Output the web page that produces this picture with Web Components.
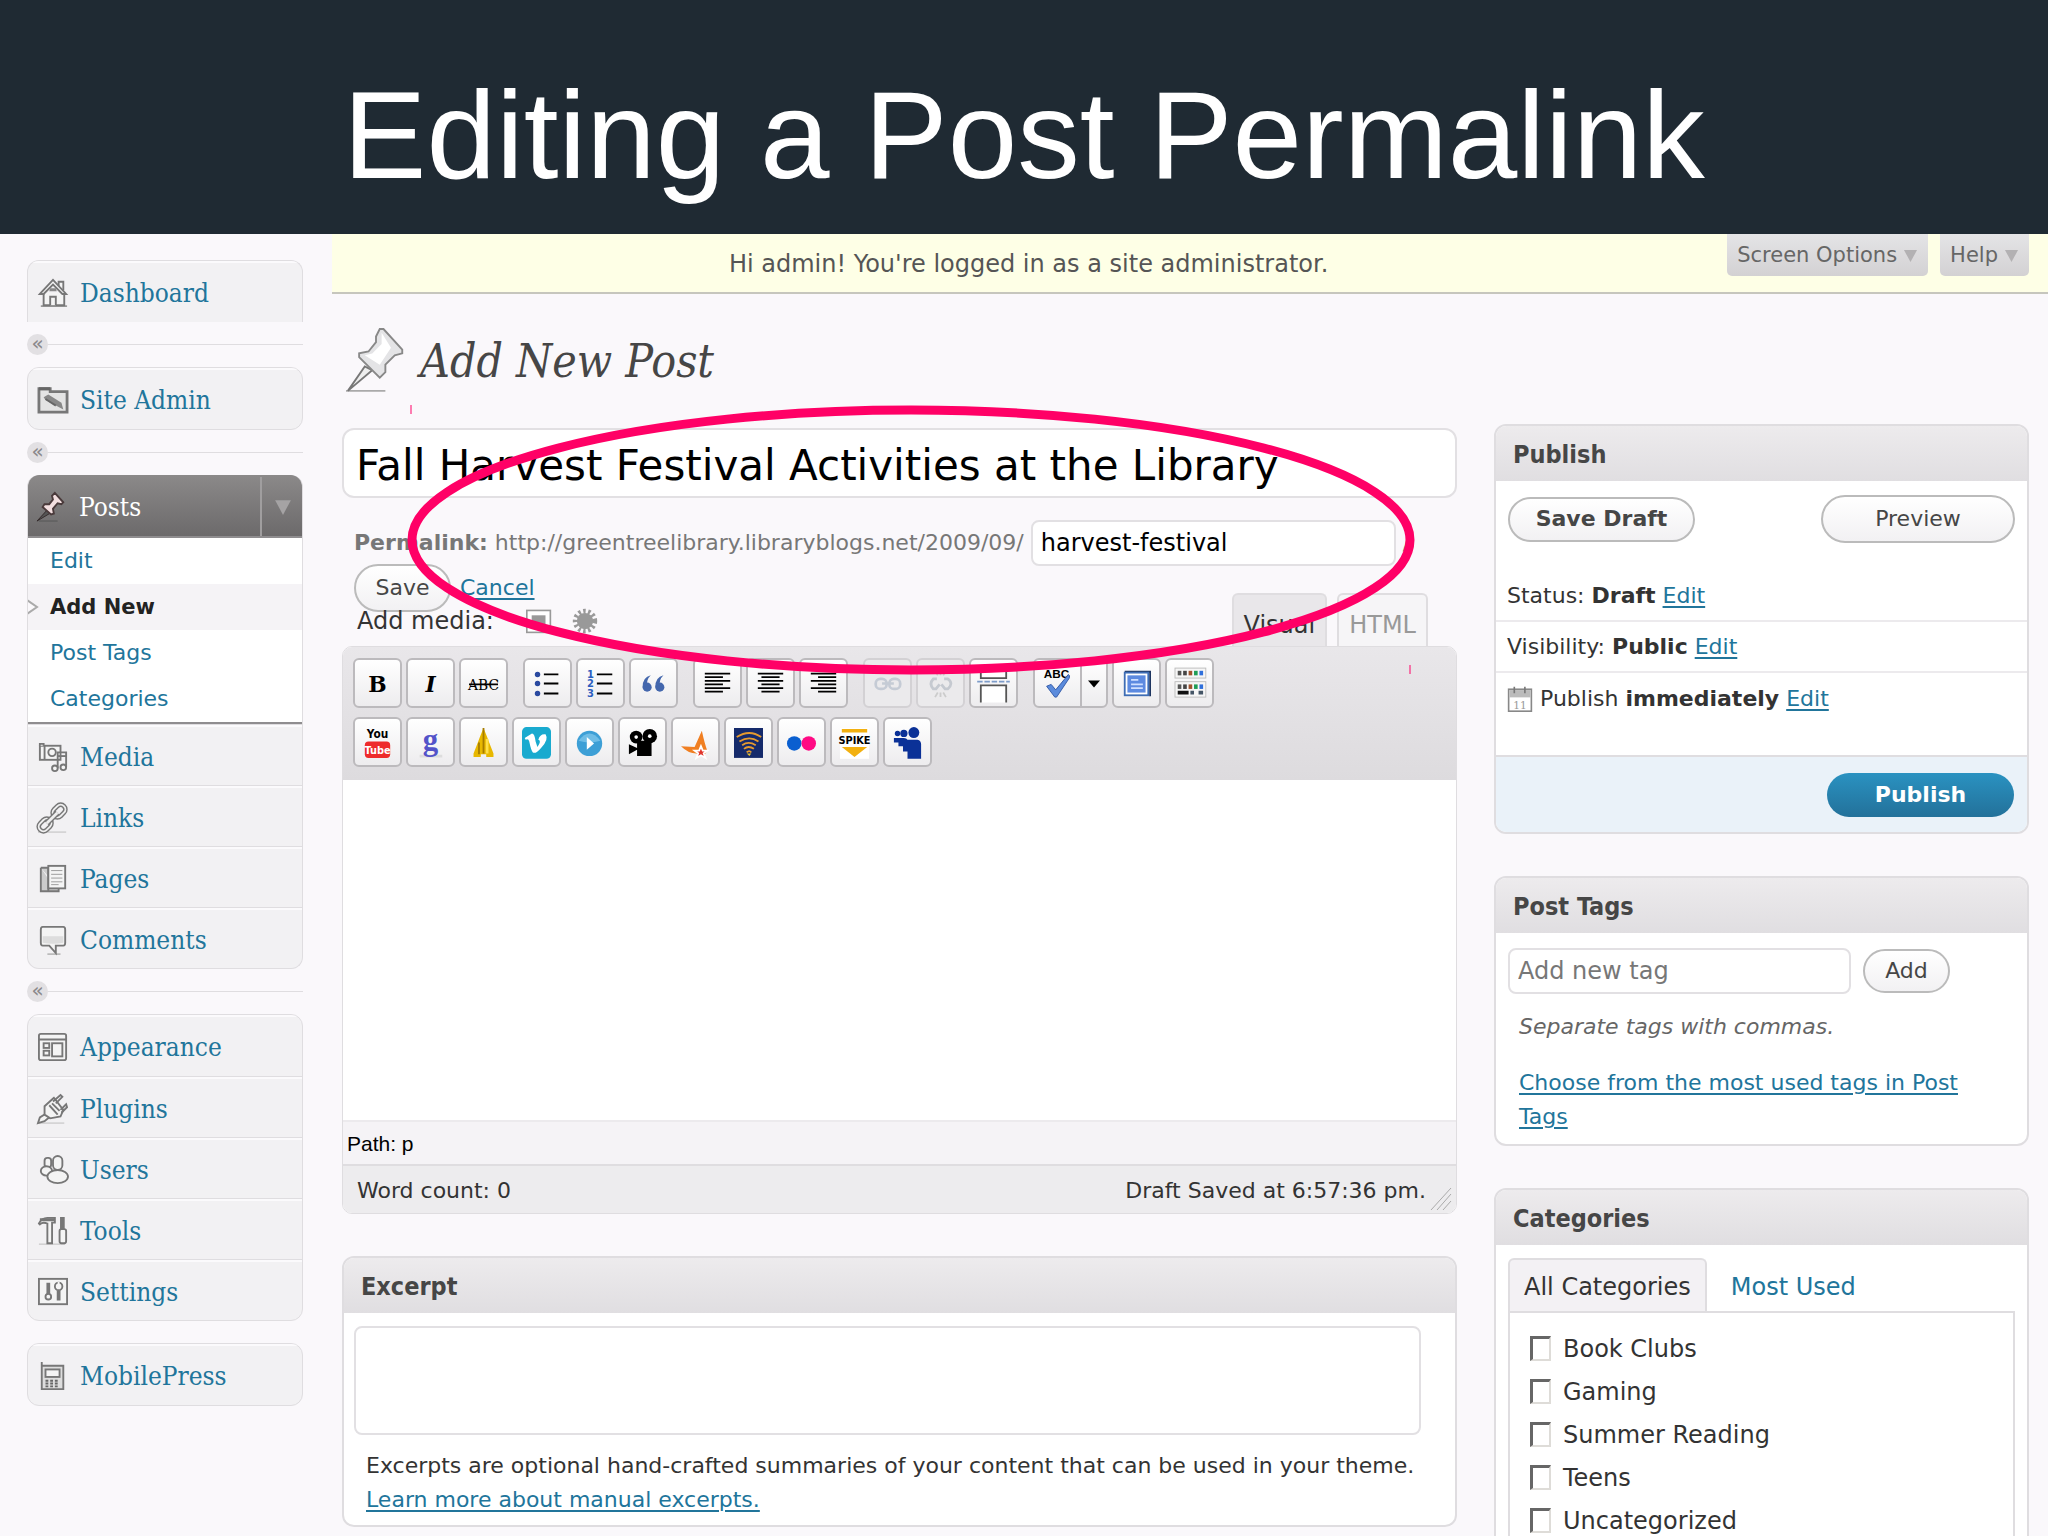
<!DOCTYPE html>
<html lang="en">
<head>
<meta charset="utf-8">
<meta name="viewport" content="width=device-width, initial-scale=1">
<title>Editing a Post Permalink</title>
<style>
  * { box-sizing: border-box; }
  html { --link: #21759b; --line: #dfdde0; --text: #333; --head: linear-gradient(#edebed, #e0dee1); }
  body {
    display: flex;
    flex-direction: column;
    margin: 0;
    height: 100vh;
    overflow: hidden;
    background: #faf8fb;
    color: var(--text);
    font: 22px/34px "DejaVu Sans", Verdana, sans-serif;
  }
  a { color: var(--link); }
  .screen { position: relative; flex: 1; min-height: 0; overflow: hidden; display: grid; grid-template-columns: 332px 1fr; }
  .columns { display: grid; grid-template-columns: 1fr 535px; gap: 37px; padding: 0 19px 0 10px; }
  .side { display: flex; flex-direction: column; gap: 42px; padding-top: 130px; }
</style>
</head>
<body>
<slide-title>Editing a Post Permalink</slide-title>
<div class="screen">
  <admin-menu></admin-menu>
  <main>
    <notice-bar>Hi admin! You're logged in as a site administrator.</notice-bar>
    <div class="columns">
      <div>
        <page-heading>Add New Post</page-heading>
        <post-title></post-title>
        <post-editor></post-editor>
        <excerpt-box></excerpt-box>
      </div>
      <div class="side">
        <publish-box></publish-box>
        <tags-box></tags-box>
        <category-box></category-box>
      </div>
    </div>
  </main>
  <callout-ring></callout-ring>
</div>

<script>
(function () {
  'use strict';

  // shared by every shadow root
  const base = `
    * { box-sizing: border-box; }
    a { color: var(--link); text-underline-offset: 3px; text-decoration-thickness: 2px; }
    h1, h2, p, ul { margin: 0; padding: 0; font-weight: normal; }
    ul { list-style: none; }
    button, input, textarea { font: inherit; color: inherit; margin: 0; }
    :host { display: block; }
  `;

  function define(name, css, html, setup) {
    const template = document.createElement('template');
    template.innerHTML = `<style>${base}${css}</style>${html}`;
    customElements.define(name, class extends HTMLElement {
      constructor() {
        super();
        this.attachShadow({ mode: 'open' }).appendChild(template.content.cloneNode(true));
      }
      connectedCallback() {
        if (setup) setup(this, this.shadowRoot);
      }
    });
  }

  const gray = 'fill="#f4f4f4" stroke="#777" stroke-width="2"';
  const bars = (rows) => rows.map(([x, w], i) =>
    `<path d="M${x} ${5 + i * 4}h${w}" stroke="#000" stroke-width="2"/>`).join('');
  const swatches = (y) => ['#555', '#444', '#a0522d', '#1f9d55', '#2f6fdb'].map((c, i) =>
    `<rect x="${3 + i * 6}" y="${y}" width="4" height="5" fill="${c}"/>`).join('');

  // all drawn on a 32 unit square
  const icons = {
    home: `<path d="M3 30h28" stroke="#999" stroke-width="2"/><path d="M6 16v13h22V16" ${gray}/><path d="M22 9V4h5v9" ${gray}/><path d="M2 17 16 2l14 15h-4L16 7 6 17z" ${gray}/><path d="M13 29v-9h6v9" ${gray}/><path d="M12 14h8l-1-3h-6z" fill="#888"/>`,
    folder: `<path d="M1 29V4h12v3h18v22z" fill="#e4e4e4" stroke="#777" stroke-width="3"/><path d="M1 4h12" stroke="#666" stroke-width="3"/><path d="m6 13 5-3 14 9 2 7-6-3-13-7z" fill="#888"/><path d="m8 15 11 7" stroke="#666" stroke-width="2"/>`,
    pin: `<path d="M2 31h20" stroke="#5a5a5a" stroke-width="2" opacity=".6"/><path d="m11 19-11 12 15-9z" fill="#555" stroke="#332a2a"/><path d="m19 1 9 10-2 2-4-1-5 6 1 5-3 1-9-8 2-3h5l4-5-1-4z" fill="#f3dfe0" stroke="#4a3a3b" stroke-width="2"/>`,
    media: `<rect x="2" y="4" width="22" height="15" ${gray}/><path d="M2 4V2h4v2M7 4v15" ${gray}/><circle cx="15" cy="11" r="4" ${gray}/><path d="M21 28V11h9v16" fill="none" stroke="#777" stroke-width="2"/><path d="M21 15h9" stroke="#777" stroke-width="2"/><circle cx="18" cy="28" r="3" ${gray}/><circle cx="27" cy="27" r="3" ${gray}/>`,
    links: `<path d="M0 31h30" stroke="#bbb" stroke-width="1"/><g transform="rotate(-45 15 16)"><rect x="-3" y="11" width="15" height="10" rx="5" fill="none" stroke="#777" stroke-width="5"/><rect x="18" y="11" width="15" height="10" rx="5" fill="none" stroke="#777" stroke-width="5"/><rect x="-3" y="11" width="15" height="10" rx="5" fill="none" stroke="#eee" stroke-width="2"/><rect x="18" y="11" width="15" height="10" rx="5" fill="none" stroke="#eee" stroke-width="2"/><path d="M7 16h16" stroke="#777" stroke-width="6"/><path d="M7 16h16" stroke="#eee" stroke-width="3"/></g>`,
    pages: `<path d="M3 4h8v25h11v-3M3 4v25h17" fill="#ccc" stroke="#777" stroke-width="2"/><rect x="11" y="2" width="18" height="24" ${gray}/><path d="M14 7h12M14 11h12M14 15h12M14 19h12M14 22h8" stroke="#999"/>`,
    comment: `<path d="M10 31h14" stroke="#bbb" stroke-width="2"/><path d="M5 2h22q2 0 2 3v14q0 3-2 3h-8v8l-7-8H5q-2 0-2-3V5q0-3 2-3z" ${gray}/><path d="M5 12h22v7q-11 2-22 0z" fill="#ddd"/>`,
    layout: `<rect x="1" y="2" width="29" height="28" rx="2" ${gray}/><path d="M1 8h29" stroke="#777" stroke-width="2"/><rect x="6" y="12" width="6" height="5" ${gray}/><rect x="6" y="20" width="6" height="5" ${gray}/><rect x="15" y="12" width="11" height="14" ${gray}/>`,
    plug: `<path d="M0 31h28" stroke="#bbb"/><path d="m0 31 2-6 8-5 3 4-6 5z" ${gray}/><path d="M17 4 7 13v9l6 4 11-2 3-7z" ${gray}/><path d="m16 8 8-7 2 2-7 7M24 17l6-6 1 3-6 6M12 12l9 10M15 10l8 8" fill="none" stroke="#777" stroke-width="2"/>`,
    users: `<rect x="7" y="3" width="7" height="10" rx="3" ${gray}/><ellipse cx="9" cy="17" rx="6" ry="5" ${gray}/><rect x="16" y="1" width="10" height="15" rx="5" ${gray}/><ellipse cx="21" cy="23" rx="11" ry="7" ${gray}/>`,
    tools: `<path d="M1 30h28" stroke="#bbb"/><path d="M1 8q3-6 9-6h8v5h-3v22h-5V8q-5-2-8 1z" ${gray}/><path d="M2 4h16" stroke="#777" stroke-width="3"/><path d="M26 1v14" stroke="#777" stroke-width="5"/><rect x="23" y="14" width="7" height="15" rx="2" ${gray}/>`,
    settings: `<rect x="1" y="2" width="30" height="27" ${gray}/><path d="M11 6v13M22 14v11" stroke="#777" stroke-width="4"/><circle cx="11" cy="21" r="3" ${gray}/><circle cx="22" cy="10" r="4" ${gray}/><path d="M22 5v4" stroke="#f4f4f4" stroke-width="2"/>`,
    phone: `<path d="M4 1v29h23V5H4" fill="#ddd" stroke="#777" stroke-width="2"/><rect x="8" y="9" width="15" height="8" ${gray}/><path d="M8 21h3m2 0h3m2 0h3M8 24h3m2 0h3m2 0h3M8 27h3m2 0h3m2 0h3" stroke="#666" stroke-width="2"/>`,
    bigpin: `<path d="M0 33h21" stroke="#aaa"/><path d="m10 20-9 13 13-11z" fill="#eee" stroke="#777"/><path d="M18 0h2l10 11v2l-4 1-5 5v4l-3 3L7 15v-2l5-1 4-5v-3z" fill="#e4e4e6" stroke="#888"/><path d="m19 2 5 8-6 9-8-5 4-1 5-5z" fill="#fff"/>`,
    bold: `<text x="16" y="25" text-anchor="middle" font-family="DejaVu Serif" font-weight="bold" font-size="24">B</text>`,
    italic: `<text x="16" y="25" text-anchor="middle" font-family="DejaVu Serif" font-weight="bold" font-style="italic" font-size="24">I</text>`,
    strike: `<text x="16" y="23" text-anchor="middle" font-family="DejaVu Serif Condensed" font-size="17">ABC</text><path d="M0 17h32" stroke="#000" stroke-width="2"/>`,
    bullets: `<g fill="#2b4aa0"><circle cx="5" cy="6" r="3"/><circle cx="5" cy="16" r="3"/><circle cx="5" cy="27" r="3"/></g><path d="M12 6h16M12 16h16M12 27h16" stroke="#000" stroke-width="2"/>`,
    numbers: `<g fill="#2b5fc0" font-family="DejaVu Sans" font-weight="bold" font-size="11"><text x="1" y="10">1</text><text x="1" y="20">2</text><text x="1" y="31">3</text></g><path d="M12 6h17M12 16h17M12 27h17" stroke="#000" stroke-width="2"/>`,
    quote: `<g fill="#4467ad"><circle cx="9" cy="20" r="5"/><circle cx="23" cy="20" r="5"/><path d="M4 20Q4 9 13 7q-5 5-4 11zM18 20q0-11 9-13-5 5-4 11z"/></g>`,
    left: bars([[2, 28], [2, 20], [2, 28], [2, 20], [2, 28], [2, 20]]),
    center: bars([[2, 28], [6, 20], [2, 28], [6, 20], [2, 28], [6, 20]]),
    right: bars([[2, 28], [10, 20], [2, 28], [10, 20], [2, 28], [10, 20]]),
    link: `<g fill="none" stroke="#c5cbd5" stroke-width="3"><rect x="3" y="11" width="12" height="11" rx="5"/><rect x="18" y="11" width="12" height="11" rx="5"/><path d="M10 16h13"/></g>`,
    unlink: `<g fill="none" stroke="#c5c9d0" stroke-width="3"><path d="M12 11H8q-5 5 0 11h3l4-5M20 11h4q7 5 0 11h-3l-4-5"/></g><path d="m10 31 3-5m3 5v-5m6 5-3-5M10 2l3 5m3-5v5m6-5-3 5" stroke="#ccc" stroke-width="2"/>`,
    more: `<path d="M2 0v10h28V0" fill="#fff" stroke="#555" stroke-width="2"/><path d="M-2 14h36" stroke="#7d9cc9" stroke-width="2" stroke-dasharray="6 2"/><path d="M2 37V18h28v19" fill="#fff" stroke="#555" stroke-width="2"/>`,
    spell: `<text x="15" y="10" text-anchor="middle" font-family="Liberation Sans" font-weight="bold" font-size="13">ABC</text><path d="m4 19 5-2 5 6L28 6q2 1 1 4L15 31h-2z" fill="#5b8bdc" stroke="#2d55a5"/>`,
    arrow: `<path d="M0 9h32L16 28z"/>`,
    full: `<path d="M3 3h28v27" fill="none" stroke="#1e3560" stroke-width="2"/><rect x="3" y="4" width="26" height="25" fill="#fff" stroke="#3e6db5" stroke-width="2"/><rect x="6" y="7" width="20" height="19" fill="#5c8ae0"/><path d="M10 12h8M10 17h13M10 21h13" stroke="#cfe0ff" stroke-width="2"/>`,
    sink: `<g fill="#f6f6f6" stroke="#bbb"><rect x="0" y="-1" width="34" height="11"/><rect x="0" y="14" width="34" height="17"/></g>${swatches(2)}${swatches(17)}<path d="M3 26h12" stroke="#111" stroke-width="4"/><path d="M17 26h4m5 0h5" stroke="#456" stroke-width="4"/>`,
    youtube: `<rect x="2" y="15" width="28" height="18" rx="4" fill="#ee2b2b"/><text x="16" y="11" text-anchor="middle" font-family="DejaVu Sans Condensed" font-weight="bold" font-size="13">You</text><text x="16" y="29" text-anchor="middle" fill="#fff" font-family="DejaVu Sans Condensed" font-weight="bold" font-size="12">Tube</text>`,
    google: `<path d="M4 31h25" stroke="#ddd" stroke-width="3"/><text x="16" y="24" text-anchor="middle" fill="#5353c9" font-family="Liberation Serif" font-weight="bold" font-size="34">g</text>`,
    rocket: `<path d="M16 0 12 10l-3 8-4 10v4h8v-3h6v3h8v-4l-4-10-3-8z" fill="#e8b800"/><path d="M16 0v28M11 16v13" stroke="#a67c00" stroke-width="2"/><path d="M20 12v16" stroke="#ffe04a" stroke-width="3"/>`,
    vimeo: `<rect x="0" y="-1" width="32" height="35" rx="5" fill="#19aacf"/><path d="m3 11 8-5q3 0 4 9l2 6q5-7 1-8 2-7 8-6 4 6-5 15-6 7-9 5-2-2-4-12-1-4-4-2z" fill="#fff"/>`,
    play: `<circle cx="16" cy="17" r="14" fill="#3d9fd6"/><path d="M4 14q12-16 24 0-12 4-24 0z" fill="#6fbde6"/><path d="m13 10 8 7-8 7z" fill="#fff"/>`,
    camera: `<circle cx="9" cy="10" r="7"/><circle cx="24" cy="9" r="8"/><path d="M10 14h16v17H10v-7l-9 5V18l9 4z"/><g fill="#fff"><circle cx="9" cy="10" r="2"/><circle cx="24" cy="9" r="2"/></g>`,
    star: `<path d="M23 3q3 14 6 22l-4 6-8-3Q8 28 0 20l15 1z" fill="#f07f22"/><path d="m22 20 2 5h5l-4 3 2 5-5-3-5 3 2-5-4-3h5z" fill="#e0352b" stroke="#fff" stroke-width="2"/>`,
    waves: `<rect x="0" y="0" width="32" height="33" fill="#152a6b"/><g fill="none" stroke="#e59a2f" stroke-width="2"><path d="M3 10q14-9 27 0M6 15q11-7 21 0M9 19q7-5 15 0M11 23q5-4 11 0M14 27q3-3 5 0"/></g><path d="m14 28 3 3 2-3z" fill="#e5c22f"/>`,
    flickr: `<circle cx="8" cy="17" r="8" fill="#0a5fd0"/><circle cx="24" cy="17" r="8" fill="#ff0a84"/>`,
    spike: `<rect x="0" y="0" width="32" height="34" fill="#fff"/><path d="M2 1h28v4H2zM2 21h28L16 32z" fill="#f2b010"/><text x="16" y="18" text-anchor="middle" font-family="DejaVu Sans Condensed" font-weight="bold" font-size="12">SPIKE</text>`,
    people: `<g fill="#0b3197"><circle cx="5" cy="6" r="3"/><circle cx="12" cy="6" r="4"/><circle cx="23" cy="5" r="6"/><path d="M1 11h11q3 0 4 2h11q4 1 4 5v16H16v-8h-5v-6H6v-4H1z"/></g>`,
    box: `<rect x="1" y="3" width="29" height="27" fill="#fff" stroke="#999" stroke-width="2"/><rect x="7" y="9" width="17" height="13" fill="#999"/>`,
    burst: `<circle cx="16" cy="16" r="10" fill="#999"/><circle cx="16" cy="16" r="12" fill="none" stroke="#999" stroke-width="6" stroke-dasharray="3 3"/>`,
    calendar: `<rect x="2" y="4" width="28" height="27" fill="#fff" stroke="#888" stroke-width="2"/><path d="M3 5h26v9H3z" fill="#bbb"/><path d="M9 1v8M22 1v8" stroke="#777" stroke-width="2"/><text x="16" y="28" text-anchor="middle" fill="#999" font-family="DejaVu Serif" font-size="13">11</text>`,
    down: `<path d="M2 4h28L16 30z"/>`,
  };

  class WpIcon extends HTMLElement {
    static get observedAttributes() {
      return ['name'];
    }
    constructor() {
      super();
      this.attachShadow({ mode: 'open' });
    }
    attributeChangedCallback() {
      this.shadowRoot.innerHTML = `
        <style>:host { display: block; flex: none; width: 32px; } svg { display: block; width: 100%; overflow: visible; }</style>
        <svg viewBox="0 0 32 32" fill="currentColor" aria-hidden="true">${icons[this.getAttribute('name')] || ''}</svg>`;
    }
  }
  customElements.define('wp-icon', WpIcon);

  define('slide-title', `
    :host { flex: none; background: #1f2a33; height: 234px; padding-top: 36px; display: flex; justify-content: center; align-items: center; }
    h1 { color: #fff; font: 125px/144px "Liberation Sans", Arial, sans-serif; }
  `, `<h1><slot></slot></h1>`);

  // sidebar
  define('menu-item', `
    a { display: flex; align-items: center; gap: 12px; height: 61px; padding: 2px 0 0 10px;
      font: 26px/34px "DejaVu Serif Condensed", Georgia, serif; text-decoration: none;
      box-shadow: inset 0 2px #fbfafc; }
    wp-icon { width: 30px; }
    :host(:not(:first-child)) { border-top: 1px solid var(--line); margin-bottom: -1px; }
    .toggle { display: none; }
    :host([open]) a { color: #fff; background: linear-gradient(#8b8989, #6c6a6b); border-radius: 10px 10px 0 0; box-shadow: none; }
    :host([open]) { border: 0; margin: 0 -1px; }
    :host([open]) .toggle { display: flex; align-items: center; justify-content: center; margin-left: auto;
      width: 43px; height: 59px; border-left: 2px solid #a09e9f; color: #a5a3a4; }
    .toggle wp-icon { width: 18px; }
  `, `<a href="#"><wp-icon></wp-icon><slot></slot><span class="toggle"><wp-icon name="down"></wp-icon></span></a>`,
  (el, root) => root.querySelector('wp-icon').setAttribute('name', el.getAttribute('icon')));

  define('menu-group', `
    :host { background: #f2f1f3; border: 1px solid var(--line); border-radius: 12px; overflow: hidden; }
    :host([cut]) { border-bottom: 0; border-radius: 12px 12px 0 0; }
    :host([current]) { border-top: 0; }
  `, `<slot></slot>`);

  define('menu-divider', `
    :host { display: flex; align-items: center; height: 45px; }
    button { width: 21px; height: 21px; border: 0; border-radius: 50%; background: #e2e0e3; color: #8a888b;
      font-size: 20px; line-height: 16px; padding: 0 0 4px; }
    span { flex: 1; height: 1px; background: var(--line); }
  `, `<button aria-label="Collapse menu">«</button><span></span>`);

  define('sub-menu', `
    ul { background: #fff; border: solid #8f8d8f; border-width: 2px 1px; margin: 0 -1px; }
    a { display: block; position: relative; height: 46px; line-height: 46px; padding-left: 22px; text-decoration: none; }
    .current a { background: #f5f3f6; color: #222; font-size: 21px; font-weight: bold; }
    .current svg { position: absolute; left: -1px; top: 15px; }
  `, `<ul>
      <li><a href="#">Edit</a></li>
      <li class="current"><a href="#"><svg width="12" height="16"><path d="M0 1l10 7-10 7" fill="#faf8fb" stroke="#aaa" stroke-width="2"/></svg>Add New</a></li>
      <li><a href="#">Post Tags</a></li>
      <li><a href="#">Categories</a></li>
    </ul>`);

  define('admin-menu', `
    nav { padding: 26px 29px 0 27px; }
    menu-group:last-child { margin-top: 22px; }
  `, `<nav aria-label="Admin">
      <menu-group cut><menu-item icon="home">Dashboard</menu-item></menu-group>
      <menu-divider></menu-divider>
      <menu-group><menu-item icon="folder">Site Admin</menu-item></menu-group>
      <menu-divider></menu-divider>
      <menu-group current>
        <menu-item icon="pin" open>Posts</menu-item>
        <sub-menu></sub-menu>
        <menu-item icon="media">Media</menu-item>
        <menu-item icon="links">Links</menu-item>
        <menu-item icon="pages">Pages</menu-item>
        <menu-item icon="comment">Comments</menu-item>
      </menu-group>
      <menu-divider></menu-divider>
      <menu-group>
        <menu-item icon="layout">Appearance</menu-item>
        <menu-item icon="plug">Plugins</menu-item>
        <menu-item icon="users">Users</menu-item>
        <menu-item icon="tools">Tools</menu-item>
        <menu-item icon="settings">Settings</menu-item>
      </menu-group>
      <menu-group><menu-item icon="phone">MobilePress</menu-item></menu-group>
    </nav>`);

  // top bar
  define('notice-bar', `
    :host { display: flex; gap: 12px; height: 60px; padding-right: 19px; background: #feffe6; border-bottom: 2px solid #c6c6bd; }
    p { flex: 1; padding-left: 10px; text-align: center; font-size: 24px; line-height: 60px; color: #555; }
    button { display: flex; align-items: center; gap: 6px; height: 42px; padding: 0 10px; border: 0; color: #666;
      border-radius: 0 0 5px 5px; background: linear-gradient(#e4e4e6, #d3d1d3); font-size: 21px; }
    wp-icon { width: 15px; color: #b3b1b3; }
  `, `<p><slot></slot></p>
    <button>Screen Options<wp-icon name="down"></wp-icon></button>
    <button>Help<wp-icon name="down"></wp-icon></button>`);

  define('page-heading', `
    :host { display: flex; align-items: center; gap: 14px; padding: 34px 0 34px 4px; }
    wp-icon { width: 60px; height: 64px; }
    h2 { font: italic 46px/66px "DejaVu Serif Condensed", Georgia, serif; color: #464646; }
  `, `<wp-icon name="bigpin"></wp-icon><h2><slot></slot></h2>`);

  define('round-button', `
    button { display: block; width: 100%; height: 100%; padding: 0; border: 2px solid #bbb; border-radius: 24px;
      background: linear-gradient(#fff, #f2f1f3); color: #464646; }
    :host([bold]) button { font-weight: bold; }
    :host([primary]) button { border: 0; background: linear-gradient(#2a92c1, #23719a); color: #fff; font-weight: bold; }
  `, `<button><slot></slot></button>`);

  define('post-title', `
    .title { display: block; width: 100%; height: 70px; padding: 4px 12px 0; border: 2px solid #e2e0e3; border-radius: 12px;
      background: #fff; color: #000; font-size: 42px; }
    .permalink { display: flex; align-items: center; gap: 7px; padding: 22px 0 0 12px; color: #777; }
    .slug { width: 365px; height: 46px; padding: 0 8px; border: 2px solid #e2e0e3; border-radius: 8px;
      background: #fff; color: #000; font-size: 24px; }
    b { color: #777; }
  `, `<input class="title" aria-label="Title" value="Fall Harvest Festival Activities at the Library">
    <div class="permalink">
      <b>Permalink:</b><label for="slug">http://greentreelibrary.libraryblogs.net/2009/09/</label>
      <input class="slug" id="slug" value="harvest-festival">/
    </div>`);

  // editor
  define('tool-button', `
    button { display: block; width: 49px; height: 50px; padding: 8px; border: 2px solid #bcbabd; border-radius: 6px;
      background: linear-gradient(#fff, #edecee); color: #000; }
    wp-icon { width: 29px; margin: auto; }
    :host([off]) button { border-color: #d3d1d4; background: #ebeaec; }
    :host([last]) { margin-right: 11px; }
    :host([split]) button { border-radius: 6px 0 0 6px; }
    :host([drop]) { margin-left: -6px; }
    :host([drop]) button { width: 28px; padding: 6px; border-radius: 0 6px 6px 0; }
    :host([drop]) wp-icon { width: 12px; }
  `, `<button><wp-icon></wp-icon></button>`,
  (el, root) => {
    const name = el.getAttribute('icon');
    root.querySelector('wp-icon').setAttribute('name', name);
    root.querySelector('button').setAttribute('aria-label', name);
  });

  define('post-editor', `
    .top { display: flex; justify-content: space-between; align-items: flex-end; padding: 0 29px 0 12px; }
    .save { display: flex; align-items: center; gap: 9px; height: 46px; margin-top: -1px; }
    .save round-button { width: 97px; height: 48px; }
    .media { display: flex; align-items: center; gap: 20px; height: 35px; padding: 0 0 15px 3px; font-size: 24px; line-height: 20px; }
    .media span { margin-right: 12px; }
    .media wp-icon { width: 26px; }
    .tabs { display: flex; gap: 10px; }
    .tabs button { height: 53px; padding: 0 10px; border: 2px solid var(--line); border-bottom: 0; border-radius: 6px 6px 0 0;
      font-size: 24px; line-height: 60px; background: #f6f5f7; color: #999; }
    .tabs .on { background: #e9e7ea; color: #333; }
    .frame { border: 1px solid var(--line); border-radius: 10px; overflow: hidden; background: #fff; }
    .tools { display: flex; flex-direction: column; gap: 9px; padding: 11px 10px 13px; background: linear-gradient(#e9e7ea, #dddbde); }
    .row { display: flex; gap: 4px; }
    textarea { display: block; width: 100%; height: 340px; border: 0; resize: none; background: #fff; }
    .path { height: 44px; padding-left: 4px; border-top: 2px solid #eceaed; background: #f5f3f6; color: #000;
      font: 21px/44px "Liberation Sans", Arial, sans-serif; }
    .status { display: flex; align-items: center; height: 49px; padding: 2px 4px 0 14px; border-top: 2px solid var(--line); background: #edecee; }
    .status span { flex: 1; }
    .status svg { align-self: flex-end; margin: 0 0 2px 4px; }
  `, `<div class="top">
      <div>
        <div class="save"><round-button>Save</round-button><a href="#">Cancel</a></div>
        <div class="media"><span>Add media:</span><wp-icon name="box"></wp-icon><wp-icon name="burst"></wp-icon></div>
      </div>
      <div class="tabs"><button class="on">Visual</button><button>HTML</button></div>
    </div>
    <div class="frame">
      <div class="tools">
        <div class="row">
          <tool-button icon="bold"></tool-button><tool-button icon="italic"></tool-button><tool-button icon="strike" last></tool-button>
          <tool-button icon="bullets"></tool-button><tool-button icon="numbers"></tool-button><tool-button icon="quote" last></tool-button>
          <tool-button icon="left"></tool-button><tool-button icon="center"></tool-button><tool-button icon="right" last></tool-button>
          <tool-button icon="link" off></tool-button><tool-button icon="unlink" off></tool-button><tool-button icon="more" last></tool-button>
          <tool-button icon="spell" split></tool-button><tool-button icon="arrow" drop></tool-button>
          <tool-button icon="full"></tool-button><tool-button icon="sink"></tool-button>
        </div>
        <div class="row">
          <tool-button icon="youtube"></tool-button><tool-button icon="google"></tool-button><tool-button icon="rocket"></tool-button>
          <tool-button icon="vimeo"></tool-button><tool-button icon="play"></tool-button><tool-button icon="camera"></tool-button>
          <tool-button icon="star"></tool-button><tool-button icon="waves"></tool-button><tool-button icon="flickr"></tool-button>
          <tool-button icon="spike"></tool-button><tool-button icon="people"></tool-button>
        </div>
      </div>
      <textarea aria-label="Post content"></textarea>
      <div class="path">Path: p</div>
      <div class="status"><span>Word count: 0</span>Draft Saved at 6:57:36 pm.
        <svg width="22" height="24" stroke="#aaa" stroke-width="1"><path d="M1 23 21 1M7 23 21 7M13 23l8-9"/></svg></div>
    </div>`);

  // side boxes
  define('post-box', `
    :host { border: 2px solid var(--line); border-radius: 12px; background: #fff; overflow: hidden; }
    h2 { height: 55px; padding-left: 17px; background: var(--head); color: #464646;
      font: bold 25px/57px "DejaVu Sans Condensed", Tahoma, sans-serif; }
  `, `<h2></h2><slot></slot>`,
  (el, root) => { root.querySelector('h2').textContent = el.getAttribute('heading'); });

  define('excerpt-box', `
    :host { margin-top: 42px; }
    textarea { display: block; width: calc(100% - 44px); height: 109px; margin: 13px 0 14px 10px; border: 2px solid #e2e0e3;
      border-radius: 8px; resize: none; background: #fff; }
    p { padding: 0 20px 8px 22px; }
  `, `<post-box heading="Excerpt">
      <textarea aria-label="Excerpt"></textarea>
      <p>Excerpts are optional hand-crafted summaries of your content that can be used in your theme.
        <br><a href="#">Learn more about manual excerpts.</a></p>
    </post-box>`);

  define('publish-box', `
    .actions { display: flex; justify-content: space-between; align-items: center; padding: 14px 12px 28px; }
    .draft { width: 187px; height: 45px; }
    .preview { width: 194px; height: 48px; }
    .line { display: flex; align-items: center; gap: 7px; height: 51px; padding-left: 11px; border-bottom: 2px solid #eceaed; }
    .last { border: 0; margin-bottom: 31px; }
    wp-icon { width: 26px; }
    .foot { display: flex; justify-content: flex-end; padding: 16px 13px 15px; background: #eaf2f9; border-top: 2px solid var(--line); }
    .foot round-button { width: 187px; height: 44px; }
  `, `<post-box heading="Publish">
      <div class="actions"><round-button class="draft" bold>Save Draft</round-button><round-button class="preview">Preview</round-button></div>
      <div class="line">Status: <b>Draft</b> <a href="#">Edit</a></div>
      <div class="line">Visibility: <b>Public</b> <a href="#">Edit</a></div>
      <div class="line last"><wp-icon name="calendar"></wp-icon>Publish <b>immediately</b> <a href="#">Edit</a></div>
      <div class="foot"><round-button primary>Publish</round-button></div>
    </post-box>`);

  define('tags-box', `
    .add { display: flex; align-items: center; gap: 12px; padding: 15px 12px 16px; }
    input { width: 343px; height: 46px; padding: 0 8px; border: 2px solid #e2e0e3; border-radius: 8px; color: #777; font-size: 24px; }
    round-button { width: 87px; height: 44px; }
    p { padding: 0 40px 22px 23px; }
    p:last-child { padding-bottom: 10px; }
    .hint { color: #666; font-style: italic; }
  `, `<post-box heading="Post Tags">
      <div class="add"><input aria-label="New tag" value="Add new tag"><round-button>Add</round-button></div>
      <p class="hint">Separate tags with commas.</p>
      <p><a href="#">Choose from the most used tags in Post Tags</a></p>
    </post-box>`);

  define('category-box', `
    :host { font-size: 24px; }
    .tabs { display: flex; padding: 13px 12px 0; }
    .tabs a { height: 53px; padding: 0 14px; border: 2px solid transparent; border-bottom: 0; line-height: 55px; text-decoration: none; }
    .tabs .on { margin-right: 8px; background: #f3f1f4; border-color: var(--line); border-radius: 6px 6px 0 0; color: #333; }
    ul { margin: 0 12px; padding: 14px 20px; border: 2px solid var(--line); }
    label { display: flex; align-items: center; gap: 12px; height: 43px; }
    input { appearance: none; width: 21px; height: 25px; background: #fff; border: solid; border-width: 3px 2px 2px 3px;
      border-color: #666 #dedcd8 #dedcd8 #666; }
  `, `<post-box heading="Categories">
      <div class="tabs"><a class="on" href="#">All Categories</a><a href="#">Most Used</a></div>
      <ul>
        <li><label><input type="checkbox">Book Clubs</label></li>
        <li><label><input type="checkbox">Gaming</label></li>
        <li><label><input type="checkbox">Summer Reading</label></li>
        <li><label><input type="checkbox">Teens</label></li>
        <li><label><input type="checkbox">Uncategorized</label></li>
      </ul>
    </post-box>`);

  // hand drawn highlight, floats over the editor
  define('callout-ring', `
    :host { position: absolute; left: 407px; top: 171px; pointer-events: none; }
    svg { display: block; }
  `, `<svg width="1009" height="270" fill="none" stroke="#ff0066" aria-hidden="true">
      <ellipse cx="504" cy="135" rx="499" ry="130" stroke-width="9"/>
      <path d="M4 0v9M1003 260v9" stroke-width="1"/>
    </svg>`);
})();
</script>
</body>
</html>
